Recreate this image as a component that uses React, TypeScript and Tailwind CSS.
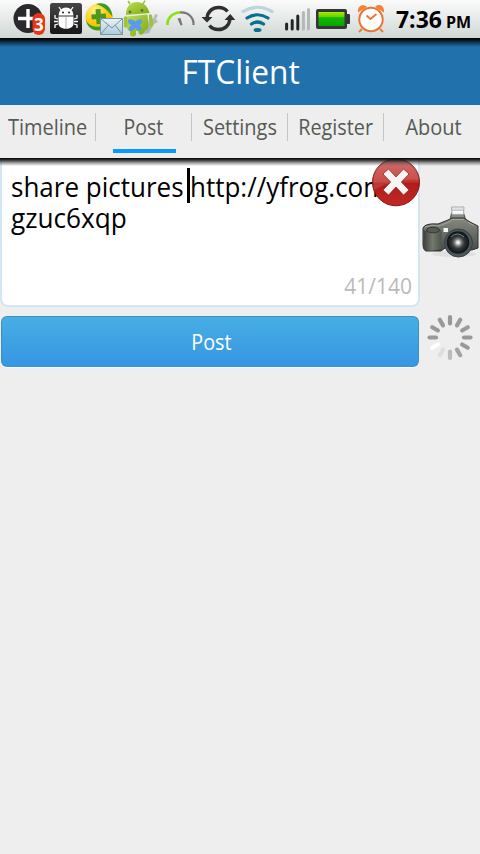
import type { ReactNode } from "react";

const tabs = [
  { label: "Timeline", fit: "scale-x-[0.95]" },
  { label: "Post", fit: "scale-x-[0.93] pr-px" },
  { label: "Settings", fit: "scale-x-[0.95]" },
  { label: "Register", fit: "scale-x-[0.945] pl-px" },
  { label: "About", fit: "scale-x-[0.95] pl-[3px]" },
];

function Icon({ w, h = 38, className = "", children }: { w: number; h?: number; className?: string; children: ReactNode }) {
  return (
    <svg width={w} height={h} viewBox={`0 0 ${w} ${h}`} className={`block shrink-0 ${className}`}>
      {children}
    </svg>
  );
}

function StatusBar() {
  return (
    <header className="flex h-[38px] shrink-0 items-center overflow-hidden bg-gradient-to-b from-[#fbfbfb] to-[#d0d8d4]">
      <div className="relative ml-[12px] h-[38px] w-[36px] shrink-0">
        <Icon w={36}>
          <circle cx="16" cy="18.5" r="14.5" fill="#29292b" />
          <path d="M16 9v19M6 18.500h20" stroke="#fff" strokeWidth="3.400" />
          <rect x="20.500" y="13" width="12.500" height="22" rx="6.200" fill="#e83612" />
        </Icon>
        <span className="absolute left-[22px] top-[15px] text-[17px] font-bold leading-[20px] text-white">3</span>
      </div>
      <Icon w={36}>
        <defs>
          <linearGradient id="tile" x2="0" y2="1"><stop stopColor="#464646" /><stop offset="1" stopColor="#161616" /></linearGradient>
        </defs>
        <rect x="2" y="3" width="32" height="31" rx="2.500" fill="url(#tile)" />
        <g fill="#fff" stroke="#fff">
          <path d="M10.500 15.500a7.500 8 0 0 1 15 0z" stroke="none" />
          <path d="M13 10l-2-3M23 10l2-3M10 19l-3-1v-3M26 19l3-1v-3M10 21.500H6M26 21.500h4M10 24l-3 1v3M26 24l3 1v3" fill="none" strokeWidth="1.300" />
          <path d="M10.500 16.500h15v7c0 7-15 7-15 0z" stroke="none" />
        </g>
        <path d="M18 17v12" stroke="#999" strokeWidth="0.800" />
        <circle cx="15" cy="12.500" r="1" fill="#222" /><circle cx="21" cy="12.500" r="1" fill="#222" />
      </Icon>
      <Icon w={39}>
        <defs>
          <radialGradient id="gold" cx="35%" cy="25%"><stop stopColor="#fff28a" /><stop offset="1" stopColor="#f9c800" /></radialGradient>
          <linearGradient id="mail" x2="0" y2="1"><stop stopColor="#edf3f6" /><stop offset="1" stopColor="#aacbdc" /></linearGradient>
        </defs>
        <circle cx="15" cy="17" r="13.500" fill="url(#gold)" />
        <path d="M12 4C22 1 28 8 28.500 17C25 12 20 6 12 4M2 20c2 5 8 8 16 6v4C9 32 3 27 2 20" fill="#3a9b29" />
        <path d="M12 9h5v5H22v5h-5v5H12v-5H7.500V14H12z" fill="#4f971e" transform="rotate(-4 15 16)" />
        <path d="M16.500 18.500h22v16h-22z" fill="url(#mail)" stroke="#7797a7" />
        <path d="M17 19l11 9 10-9M17 34l7.500-9M38 34l-7-9" fill="none" stroke="#7893a0" />
      </Icon>
      <Icon w={38}>
        <defs>
          <linearGradient id="robot" x2="1" y2="1"><stop stopColor="#bfdb57" /><stop offset="1" stopColor="#79ab10" /></linearGradient>
        </defs>
        <path d="M27 16l3 3 2-5 3 1-2 4 2 3-4 2-5 9-5 1z" fill="#7d827e" opacity=".45" />
        <path d="M7 4L5 1M20 4l2-3.500" stroke="#9abb34" strokeWidth="1.500" />
        <path d="M3 15C2 -1 23 -3 26.500 13z" fill="url(#robot)" />
        <circle cx="7" cy="12" r="1.400" fill="#59732b" /><circle cx="19" cy="10.500" r="1.400" fill="#59732b" />
        <path d="M4 16.500l20.500-2 1 12q0 3-3 3.500l-1.500 3q-2 3-5 1l-1-3h-2l0 4q-3 3-6 0v-4q-3-1-3-4z" fill="url(#robot)" />
        <path d="M2.500 18v8M27.500 16l1 9" stroke="#9cc43a" strokeWidth="3.400" strokeLinecap="round" />
        <path d="M5.500 19.500q3-1 7 2 3-3 6-2 2 3-2 5.500 3 3 1.500 5.500-3 1-5.500-2.500-3 4-6 3-2-3 2-6-5-2-3-5.500z" fill="#5b9bef" />
      </Icon>
      <Icon w={38} className="ml-[2px]">
        <path d="M4.500 25C4 18 9.500 12.800 17 12.500" fill="none" stroke="#8ce018" strokeWidth="2.700" />
        <path d="M17 12.500C26 12 31 18 30.500 25" fill="none" stroke="#777" strokeWidth="2.200" />
        <path d="M14.500 18.500l3-.500 2 7-2 .500z" fill="#777" />
      </Icon>
      <Icon w={37}>
        <g fill="none" stroke="#302f30" strokeWidth="3.500">
          <path d="M6 18.500C6.500 11 12 7.500 17.500 7.500q6 0 9 4" />
          <path d="M29 18.500C28.500 26 23 29.500 17.500 29.500q-6 0-9-4" />
        </g>
        <path d="M.5 17h11L6 22.500zM23.500 20L29.300 14l5 6z" fill="#302f30" />
      </Icon>
      <Icon w={38}>
        <g fill="none" strokeLinecap="round">
          <path d="M5 11.500q14-8.500 29 0" stroke="#bed3da" strokeWidth="3.200" />
          <path d="M9 18q10.500-6.500 21 0" stroke="#067091" strokeWidth="3.200" />
          <path d="M13.500 24q6-4 12 0" stroke="#067091" strokeWidth="3.200" />
        </g>
        <ellipse cx="19.500" cy="30" rx="4" ry="2" fill="#067091" />
      </Icon>
      <Icon w={28} className="ml-[6px]">
        <g strokeLinecap="round" strokeWidth="3">
          <path d="M4.600 24v5M10.200 20.500v8.500M15.800 16v13" stroke="#252525" />
          <path d="M21.400 12.500V29M26.500 9.500V29" stroke="#b4b8b6" />
        </g>
      </Icon>
      <Icon w={38} className="ml-[4px]">
        <defs>
          <linearGradient id="charge" x2="0" y2="1"><stop stopColor="#a5ea00" /><stop offset=".35" stopColor="#64d400" /><stop offset=".4" stopColor="#15b900" /><stop offset="1" stopColor="#05a500" /></linearGradient>
        </defs>
        <rect x="2" y="9" width="31" height="20" rx="2" fill="#363438" />
        <rect x="32" y="14" width="4" height="10" rx="1" fill="#363438" />
        <rect x="4.500" y="12" width="26" height="14" fill="url(#charge)" />
      </Icon>
      <Icon w={40} className="ml-[1px]">
        <path d="M5 12.500C4 4 12 4 14 7zM22 7c3-4 10-2 9 5.500z" fill="#f58132" />
        <path d="M9 29l-3 3M27 29l3 3" stroke="#ec7934" strokeWidth="2" />
        <circle cx="18" cy="19.500" r="11.700" fill="#fff" stroke="#ec7336" strokeWidth="2" />
        <path d="M13.500 15.500l4 3.500 6-5" fill="none" stroke="#e97838" strokeWidth="2" />
      </Icon>
      <div className="ml-[3px] flex h-[38px] items-baseline whitespace-nowrap font-bold text-black">
        <span className="w-[50px] origin-left scale-x-[0.955] text-[24px] leading-[38px]">7:36</span>
        <span className="origin-left text-[16px] leading-[38px]">PM</span>
      </div>
    </header>
  );
}

function DeleteBadge() {
  return (
    <Icon w={50} h={50} className="absolute left-[371px] top-0">
      <defs>
        <linearGradient id="red" x2="0" y2="1"><stop stopColor="#c95b55" /><stop offset=".5" stopColor="#c1322e" /><stop offset=".51" stopColor="#ae1c1b" /><stop offset="1" stopColor="#c22824" /></linearGradient>
      </defs>
      <circle cx="25" cy="24.300" r="23.500" fill="url(#red)" stroke="#841918" />
      <path d="M2.500 25C1 12 12 2.500 25 2.500S48 12 47.500 22Q25 19 2.500 32z" fill="#fff" opacity=".13" />
      <path d="M17.500 11l7.500 8 7.500-8 5.500 5-7.700 8 7.700 8-5.500 5-7.500-8-7.500 8-5.500-5 7.700-8-7.700-8z" fill="#f7f5f3" stroke="#911c1b" strokeWidth=".7" />
    </Icon>
  );
}

function Camera() {
  return (
    <Icon w={60} h={60} className="mt-[46px]">
      <defs>
        <linearGradient id="body" x2="0" y2="1"><stop stopColor="#868980" /><stop offset=".5" stopColor="#676b63" /><stop offset="1" stopColor="#484c46" /></linearGradient>
        <linearGradient id="flash" x2="0" y2="1"><stop stopColor="#f5f5f5" /><stop offset=".5" stopColor="#c7c8c7" /><stop offset=".51" stopColor="#fff" /><stop offset="1" stopColor="#eee" /></linearGradient>
        <linearGradient id="grip" x2="1" y2="0"><stop stopColor="#3b3f3a" /><stop offset=".5" stopColor="#747970" /><stop offset="1" stopColor="#4f534c" /></linearGradient>
        <radialGradient id="lens"><stop stopColor="#fff" /><stop offset=".14" stopColor="#dcdedd" /><stop offset=".35" stopColor="#70767a" /><stop offset=".6" stopColor="#303537" /><stop offset="1" stopColor="#15191a" /></radialGradient>
      </defs>
      <ellipse cx="34" cy="50" rx="22" ry="3" fill="#dfdfdf" />
      <path d="M30 17l1.500-8h12l2.500 8z" fill="#8b8e88" stroke="#454740" />
      <path d="M31.500 3h12.500l-.5 7.500H32z" fill="url(#flash)" stroke="#aaa" />
      <path d="M3 24q2-5 15-4l10-4 4-2h12l6 4 8 4v22l-6 2-23-1-4-1-4 3H6q-3-1-3-7z" fill="url(#body)" stroke="#2d302b" />
      <path d="M3.500 26q8 3 18 0v18q-8 4-17 2z" fill="url(#grip)" />
      <ellipse cx="13" cy="26" rx="6.500" ry="2.800" fill="#555a53" stroke="#343832" />
      <path d="M5 23q7-3 14-1l10-4 3-2.500h12M48 18.500l6 3" fill="none" stroke="#a3a69d" />
      <rect x="23.500" y="24" width="4.500" height="4" fill="#f5f5f3" />
      <circle cx="38.500" cy="39" r="14" fill="#4b575c" stroke="#343e42" />
      <circle cx="38" cy="38.500" r="10.500" fill="url(#lens)" stroke="#141819" strokeWidth="1.500" />
      <path d="M31 33q6-6 13 0" fill="none" stroke="#777d80" />
    </Icon>
  );
}

const spokes = ["#989898", "#9a9a9a", "#9b9b9b", "#999", "#999", "#a2a2a2", "#bcbcbc", "#dedede", "#fff", "#999", "#989898", "#999"];

function Spinner() {
  return (
    <Icon w={60} h={50} className="mt-[48px]">
      {spokes.map((color, i) => (
        <path key={i} d="M30 5v6.500" stroke={color} strokeWidth="4.200" strokeLinecap="round" transform={`rotate(${i * 30} 30 25.500)`} />
      ))}
    </Icon>
  );
}

export default function App() {
  return (
    <div className="flex h-[854px] w-[480px] flex-col overflow-hidden bg-[#eeeeee] [font-family:'Open_Sans','Noto_Sans',sans-serif]">
      <StatusBar />
      <div className="flex h-[67px] shrink-0 items-center justify-center bg-[linear-gradient(to_bottom,#000_0px,#07121b_2px,#184a71_6px,#2171ad_9px)]">
        <h1 className="ml-px scale-x-[0.96] text-[33px] leading-none text-white">FTClient</h1>
      </div>
      <nav className="grid h-[53px] shrink-0 grid-cols-[96px_96px_96px_96px_96px] text-[#555a55]">
        {tabs.map((tab, i) => (
          <div key={tab.label} className="flex flex-col items-center">
            <div className={`mt-2 flex h-7 w-full items-center justify-center ${i < 4 ? "border-r border-[#c5c5c5]" : ""}`}>
              <span className={`whitespace-nowrap text-[21px] leading-none ${tab.fit}`}>{tab.label}</span>
            </div>
            {i === 1 && <div className="ml-[1px] mt-2 h-1 w-[63px] bg-[#0899ff]" />}
          </div>
        ))}
      </nav>
      <main className="relative flex grow">
        <section className="w-[420px]">
          <div className="relative h-[149px] rounded-b-[8px] border-2 border-t-0 border-[#d3e6f3] bg-white">
            <div className="flex flex-col pl-[9px] pt-[13px] text-[27px] leading-[31px] text-black">
              <div className="flex whitespace-nowrap">
                <span className="w-[179px] origin-left scale-x-[0.963]">share pictures</span>
                <span className="origin-left scale-x-[0.962]">http://yfrog.com</span>
              </div>
              <span className="origin-left scale-x-[0.97]">gzuc6xqp</span>
            </div>
            <div className="absolute left-[185px] top-[10px] h-[35px] w-[3px] bg-black" />
            <span className="absolute bottom-[7px] right-[6px] origin-right text-[21px] leading-[24px] text-[#bababa]">41/140</span>
          </div>
          <button className="mx-px mt-[9px] flex h-[51px] w-[418px] items-center justify-center rounded-[6px] border border-[#3c8fbd] border-b-[#3796e2] bg-gradient-to-b from-[#47aee3] to-[#3796e2] text-[21px] text-white shadow-[0_1px_0_#fff]">
            <span className="ml-[2px] mt-[2px] scale-x-[0.94] leading-none">Post</span>
          </button>
        </section>
        <aside className="flex w-[60px] flex-col">
          <Camera />
          <Spinner />
        </aside>
        <DeleteBadge />
        <div className="absolute inset-x-0 top-0 h-[8px] bg-[linear-gradient(to_bottom,#000000_0px,#1c1c1ce6_2px,#55555588_5px,#99999900_8px)]" />
      </main>
    </div>
  );
}
